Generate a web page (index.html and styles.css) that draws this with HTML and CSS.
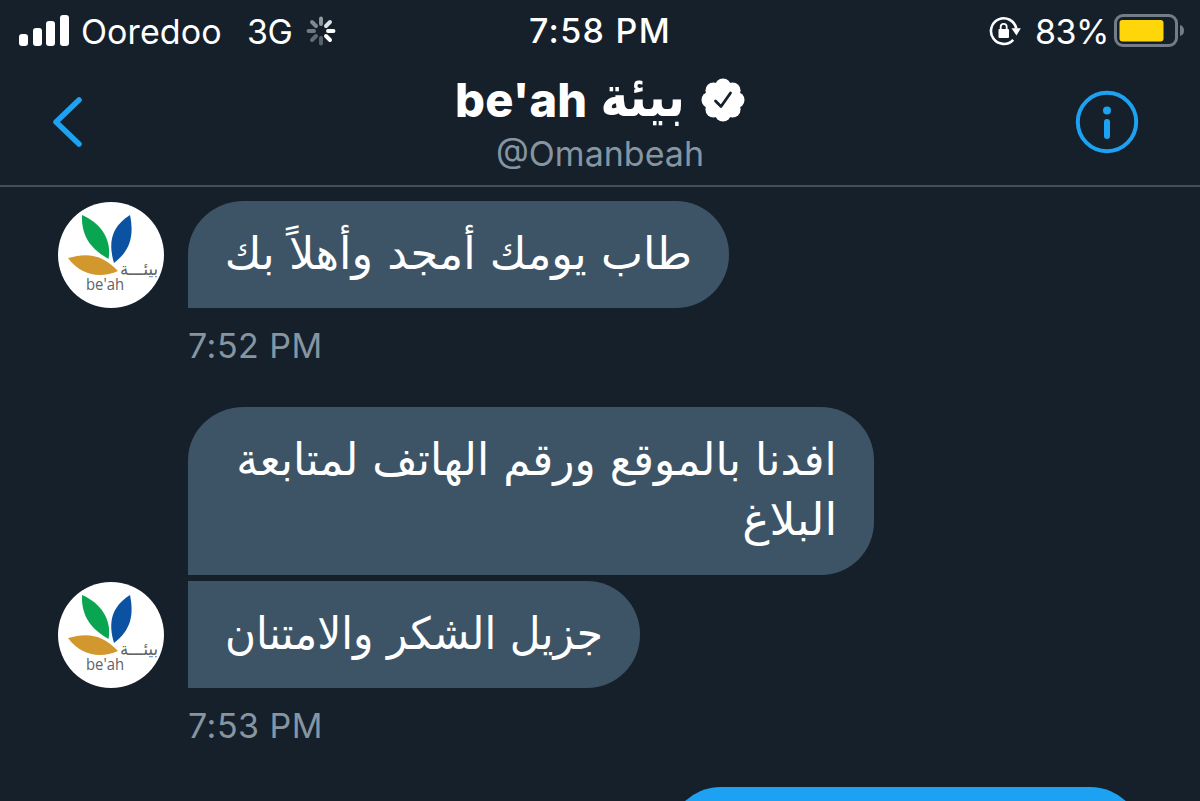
FILE: index.html
```html
<!DOCTYPE html>
<html lang="en">
<head>
<meta charset="utf-8">
<title>be'ah</title>
<link rel="stylesheet" href="styles.css">
</head>
<body>
<div class="screen">
  <div class="status">
    <div class="status-left">
      <svg class="signal" width="50" height="32" viewBox="0 0 50 32" fill="#fff"><rect y="19" width="9" height="12" rx="3"/><rect x="14" y="13" width="9" height="18" rx="3"/><rect x="27" y="6" width="9" height="25" rx="3"/><rect x="41" y="0" width="9" height="31" rx="3"/></svg>
      <span class="carrier">Ooredoo</span>
      <span class="network">3G</span>
      <svg class="spinner" width="30" height="30" viewBox="-15 -15 30 30" stroke-width="3.900" stroke-linecap="round">
        <path d="M0-7V-12.500" stroke="#929aa2"/><path d="M5-5L9-9" stroke="#dfe2e4"/><path d="M7 0H12.500" stroke="#fff"/><path d="M5 5L9 9" stroke="#fff"/><path d="M0 7V12.500" stroke="#59636d"/><path d="M-5 5L-9 9" stroke="#626c75"/><path d="M-7 0H-12.500" stroke="#707982"/><path d="M-5-5L-9-9" stroke="#818a92"/>
      </svg>
    </div>
    <div class="clock">7:58 PM</div>
    <div class="status-right">
      <svg class="lock" width="32" height="32" viewBox="0 0 32 32"><path d="M24.200 24.800A12.800 12.800 0 1 1 27.300 13.500" fill="none" stroke="#fff" stroke-width="2.600"/><path d="M22.500 13.200H31.800L27.500 20.500Z" fill="#fff"/><rect x="9.500" y="14" width="10.500" height="9" rx="1" fill="#fff"/><path d="M11.700 15V11.800a3 3 0 0 1 6 0V15" fill="none" stroke="#fff" stroke-width="1.800"/></svg>
      <span class="percent">83%</span>
      <svg class="battery" width="72" height="34" viewBox="0 0 72 34"><rect x="1.500" y="1.500" width="61" height="30" rx="7.500" fill="none" stroke="#747c87" stroke-width="3"/><rect x="5.500" y="6" width="44" height="21.500" rx="3" fill="#ffd60a"/><path d="M66 11Q70 12 70 16.500T66 22Z" fill="#747c87"/></svg>
    </div>
  </div>
  <header class="header">
    <svg class="back" width="32" height="52" viewBox="0 0 32 52"><path d="M28 4L5 26L28 48" fill="none" stroke="#1da1f2" stroke-width="5.500" stroke-linecap="round" stroke-linejoin="round"/></svg>
    <div class="title">
      <div class="name"><span class="name-latin">be'ah</span><span class="name-arabic" dir="rtl">بيئة</span>
        <svg class="verified" width="44" height="44" viewBox="-22 -22 44 44"><g fill="#fff"><circle r="17"/><circle cy="-13.500" r="8"/><circle cx="9.550" cy="-9.550" r="8"/><circle cx="13.500" r="8"/><circle cx="9.550" cy="9.550" r="8"/><circle cy="13.500" r="8"/><circle cx="-9.550" cy="9.550" r="8"/><circle cx="-13.500" r="8"/><circle cx="-9.550" cy="-9.550" r="8"/></g><path d="M-7.500 1L-2 6.500L7.500-7" fill="none" stroke="#16202a" stroke-width="2.800" stroke-linecap="round" stroke-linejoin="round"/></svg>
      </div>
      <div class="handle">@Omanbeah</div>
    </div>
    <svg class="info" width="64" height="64" viewBox="0 0 64 64"><circle cx="32" cy="32" r="29.200" fill="none" stroke="#1da1f2" stroke-width="4"/><circle cx="32" cy="20.500" r="4" fill="#1da1f2"/><path d="M32 32V46" stroke="#1da1f2" stroke-width="6" stroke-linecap="round"/></svg>
  </header>
  <main class="thread">
    <div class="row">
      <svg class="avatar" width="106" height="106" viewBox="0 0 106 106">
        <circle cx="53" cy="53" r="53" fill="#fff"/>
        <path d="M24 13C43 21 54 38 50.500 57C35 48 23 36 24 13Z" fill="#0aa550"/>
        <path d="M72 13C53 25 50 41 56 61C73 48 76 33 72 13Z" fill="#0b52a2"/>
        <path d="M10 56C30 50 45 53 60 69C44 76 24 75 10 56Z" fill="#d2982e"/>
        <text class="logo-latin" x="28" y="88" textLength="38" lengthAdjust="spacingAndGlyphs">be'ah</text>
        <text class="logo-arabic" x="62" y="73" textLength="38" lengthAdjust="spacingAndGlyphs">بيئـــة</text>
      </svg>
      <div class="bubble first" dir="rtl"><span class="line l1">طاب يومك أمجد وأهلاً بك</span></div>
    </div>
    <div class="time">7:52 PM</div>
    <div class="row">
      <div class="avatar"></div>
      <div class="bubble second" dir="rtl"><span class="line l2">افدنا بالموقع ورقم الهاتف لمتابعة</span><span class="line l3">البلاغ</span></div>
    </div>
    <div class="row grouped">
      <svg class="avatar" width="106" height="106" viewBox="0 0 106 106">
        <circle cx="53" cy="53" r="53" fill="#fff"/>
        <path d="M24 13C43 21 54 38 50.500 57C35 48 23 36 24 13Z" fill="#0aa550"/>
        <path d="M72 13C53 25 50 41 56 61C73 48 76 33 72 13Z" fill="#0b52a2"/>
        <path d="M10 56C30 50 45 53 60 69C44 76 24 75 10 56Z" fill="#d2982e"/>
        <text class="logo-latin" x="28" y="88" textLength="38" lengthAdjust="spacingAndGlyphs">be'ah</text>
        <text class="logo-arabic" x="62" y="73" textLength="38" lengthAdjust="spacingAndGlyphs">بيئـــة</text>
      </svg>
      <div class="bubble third" dir="rtl"><span class="line l4">جزيل الشكر والامتنان</span></div>
    </div>
    <div class="time">7:53 PM</div>
    <div class="outgoing"></div>
  </main>
</div>
</body>
</html>
```

FILE: styles.css
```css
* { box-sizing: border-box; }
body { margin: 0; background: #16202a; }
.screen { width: 1200px; height: 801px; overflow: hidden; background: #16202a; font-family: Inter, "Liberation Sans", sans-serif; color: #fff; }
.status { height: 60px; display: grid; grid-template-columns: 400px 400px 400px; align-items: center; font-size: 34px; line-height: 62px; white-space: nowrap; }
.status-left { display: flex; align-items: center; padding-left: 19px; height: 58px; }
.signal { margin-right: 12px; }
.carrier { width: 166px; letter-spacing: 0.1px; padding-top: 2px; }
.network { width: 59px; letter-spacing: -0.5px; padding-top: 2px; }
.clock { text-align: center; font-weight: 500; letter-spacing: 1.3px; }
.status-right { display: flex; align-items: center; justify-content: flex-end; padding-right: 14px; height: 58px; }
.lock { margin-right: 14px; }
.percent { width: 79px; letter-spacing: -0.5px; padding-top: 2px; }
.header { height: 127px; display: grid; grid-template-columns: 450px 300px 450px; align-items: start; border-bottom: 2px solid #424e5a; }
.back { margin: 36px 0 0 51px; }
.info { margin: 30px 61px 0 0; justify-self: end; }
.title { display: flex; flex-direction: column; align-items: center; white-space: nowrap; }
.name { height: 72px; display: flex; align-items: center; line-height: 72px; margin-top: 4px; }
.name-latin { font: 800 47px/72px Inter, sans-serif; letter-spacing: 0.2px; }
.name-arabic { font: 700 47px/72px "DejaVu Sans", sans-serif; margin: 0 16px 0 13px; transform: translateY(-3px) scaleY(1.2); }
.handle { font-size: 34px; line-height: 40px; color: #8595a2; margin-top: -2px; }
.thread { padding: 14px 58px 0; }
.row { display: flex; align-items: flex-end; gap: 24px; }
.avatar { width: 106px; flex: none; }
.bubble { background: #3d5466; padding: 23px 37px; border-radius: 56px 53px 53px 0 / 53px 53px 53px 0; display: flex; flex-direction: column; align-items: flex-start; }
.first { width: 541px; height: 107px; }
.second { width: 686px; height: 168px; }
.third { width: 452px; height: 107px; border-top-left-radius: 0; }
.grouped { margin-top: 6px; }
.line { display: block; font: 42px/60px "DejaVu Sans", sans-serif; white-space: nowrap; transform-origin: right; }
.l1 { transform: scale(1.062, 1.06); }
.l2 { transform: scale(1.045, 1.06); }
.l3 { transform: scale(1.09, 1.06); }
.l4 { transform: scale(1.008, 1.06); }
.time { padding-left: 130px; height: 99px; font-size: 34px; line-height: 76px; color: #8595a2; letter-spacing: 0.5px; }
.outgoing { width: 475px; height: 107px; margin-left: 610px; border-radius: 53px 53px 0 53px; background: #1da1f2; }
.logo-latin { font: 17px "Open Sans", sans-serif; fill: #606366; }
.logo-arabic { font: 18px "DejaVu Sans", sans-serif; fill: #606366; }
```
